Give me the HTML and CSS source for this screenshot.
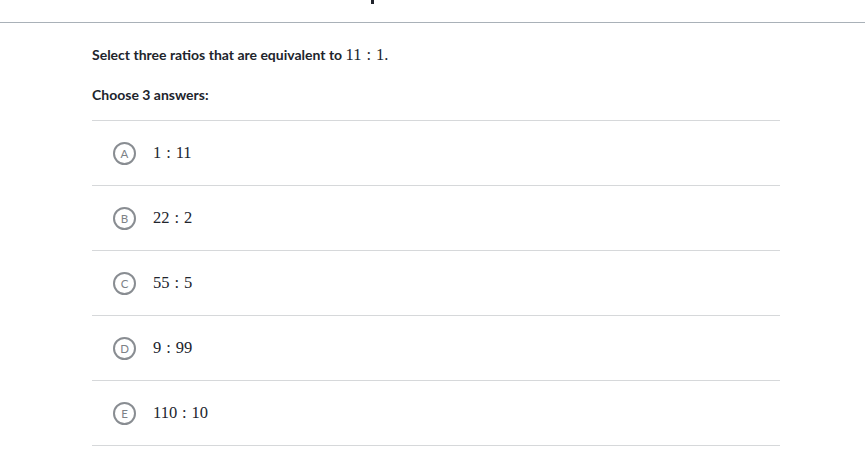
FILE: index.html
```html
<!DOCTYPE html>
<html>
<head>
<meta charset="utf-8">
<link rel="stylesheet" href="styles.css">
</head>
<body>
<header class="topbar">
  <div class="title-tail"></div>
</header>
<main class="content">
  <p class="prompt">Select three ratios that are equivalent to <span class="math">11<span class="colon">:</span>1.</span></p>
  <p class="instr">Choose 3 answers:</p>
  <ul class="choices">
    <li class="choice"><span class="letter">A</span><span class="math">1<span class="colon">:</span>11</span></li>
    <li class="choice"><span class="letter">B</span><span class="math">22<span class="colon">:</span>2</span></li>
    <li class="choice"><span class="letter">C</span><span class="math">55<span class="colon">:</span>5</span></li>
    <li class="choice"><span class="letter">D</span><span class="math">9<span class="colon">:</span>99</span></li>
    <li class="choice"><span class="letter">E</span><span class="math">110<span class="colon">:</span>10</span></li>
  </ul>
</main>
</body>
</html>
```
FILE: styles.css
```css
* { box-sizing: border-box; }
html, body { margin: 0; padding: 0; background: #fff; }
body { font-family: Lato, "Liberation Sans", sans-serif; color: #21242c; }
.topbar {
  height: 23px;
  border-bottom: 1px solid #a9b1b8;
  position: relative;
}
.title-tail {
  position: absolute;
  left: 371px;
  top: 0;
  width: 3px;
  height: 4px;
  background: #21242c;
}
.content { padding: 0 85px 0 92px; }
.prompt {
  margin: 0;
  padding-top: 22px;
  font-size: 14px;
  font-weight: 700;
  line-height: 20px;
}
.prompt .math { font-weight: 400; font-size: 16.5px; }
.math { font-family: "Liberation Serif", "DejaVu Serif", serif; color: #21242c; }
.colon { margin: 0 0.3em; }
.instr {
  margin: 20px 0 0 0;
  font-size: 14px;
  font-weight: 700;
  line-height: 20px;
}
.choices {
  list-style: none;
  margin: 15px 0 0 0;
  padding: 0;
  border-top: 1px solid #d6d8da;
}
.choice {
  display: flex;
  align-items: center;
  height: 65px;
  border-bottom: 1px solid #d6d8da;
  padding-left: 21px;
  gap: 17px;
}
.letter {
  width: 23px;
  height: 23px;
  border: 2px solid #898d92;
  border-radius: 50%;
  display: flex;
  align-items: center;
  justify-content: center;
  font-size: 11.5px;
  color: #7d8186;
  font-family: Lato, sans-serif;
  font-weight: 400;
}
.choice .math { font-size: 16.5px; }
```
